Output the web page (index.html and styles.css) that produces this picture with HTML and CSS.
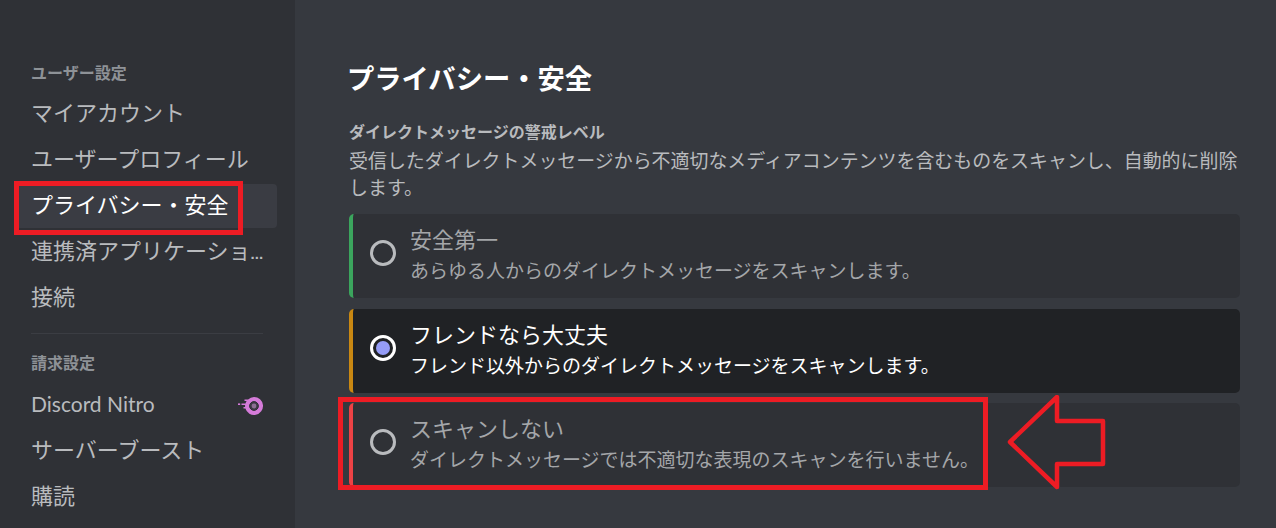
FILE: index.html
```html
<!DOCTYPE html>
<html lang="ja">
<head>
    <meta charset="UTF-8">
    <meta name="viewport" content="width=device-width, initial-scale=1.0">
    <title>プライバシー・安全</title>
    <link rel="stylesheet" href="styles.css">
</head>
<body>
    <div id="page">
        <nav class="sidebar">
            <div class="nav-label">ユーザー設定</div>
            <a class="nav-item">マイアカウント</a>
            <a class="nav-item">ユーザープロフィール</a>
            <a class="nav-item active">プライバシー・安全</a>
            <a class="nav-item">連携済アプリケーショ<span class="dots">...</span></a>
            <a class="nav-item">接続</a>
            <div class="nav-divider"></div>
            <div class="nav-label billing">請求設定</div>
            <a class="nav-item nitro">
                <span class="nitro-name">Discord Nitro</span>
                <svg class="nitro-icon" width="26" height="20" viewBox="0 0 26 20">
                    <path fill="#d57bd9" d="M16 1a9 9 0 1 1-8.6 11.6H5.5V11h1.6a9 9 0 0 1 0-2H3.5V7.4h4A9 9 0 0 1 8.6 5H6.5V3.4h3.6A9 9 0 0 1 16 1z"/>
                    <rect x="0" y="7.4" width="2.2" height="1.6" fill="#d57bd9"/>
                    <circle cx="16" cy="10" r="4.4" fill="#3f3a45" stroke="#2f3136" stroke-width="1"/>
                    <circle cx="16" cy="10" r="2.4" fill="#8d6f93"/>
                </svg>
            </a>
            <a class="nav-item">サーバーブースト</a>
            <a class="nav-item">購読</a>
        </nav>

        <main class="content">
            <h1>プライバシー・安全</h1>
            <h2>ダイレクトメッセージの警戒レベル</h2>
            <p class="desc">受信したダイレクトメッセージから不適切なメディアコンテンツを含むものをスキャンし、自動的に削除します。</p>

            <div class="options">
                <div class="option safe">
                    <span class="radio"></span>
                    <div class="option-text">
                        <div class="option-title">安全第一</div>
                        <div class="option-sub">あらゆる人からのダイレクトメッセージをスキャンします。</div>
                    </div>
                </div>
                <div class="option friends selected">
                    <span class="radio"></span>
                    <div class="option-text">
                        <div class="option-title">フレンドなら大丈夫</div>
                        <div class="option-sub">フレンド以外からのダイレクトメッセージをスキャンします。</div>
                    </div>
                </div>
                <div class="option none">
                    <span class="radio"></span>
                    <div class="option-text">
                        <div class="option-title">スキャンしない</div>
                        <div class="option-sub">ダイレクトメッセージでは不適切な表現のスキャンを行いません。</div>
                    </div>
                </div>
            </div>
        </main>

        <div class="mark mark-nav"></div>
        <div class="mark mark-option"></div>
        <svg class="mark-arrow" width="104" height="100" viewBox="0 0 104 100">
            <polygon points="3,47 50,2 50,26 96,26 96,69 50,69 50,92" fill="none" stroke="#ed1c24" stroke-width="4.5" stroke-linejoin="round"/>
        </svg>
    </div>
</body>
</html>
```

FILE: styles.css
```css
* {
    box-sizing: border-box;
}

html, body {
    margin: 0;
    padding: 0;
    height: 100%;
    overflow: hidden;
}

body {
    font-family: "Noto Sans CJK JP", "Liberation Sans", sans-serif;
    background-color: #36393f;
    color: #b9bbbe;
}

#page {
    position: relative;
    display: flex;
    width: 1276px;
    height: 528px;
    overflow: hidden;
}

.sidebar {
    flex: 0 0 295px;
    min-width: 0;
    background-color: #2f3136;
    padding: 59px 18px 0 16px;
}

.nav-label {
    height: 26px;
    line-height: 26px;
    padding-left: 15px;
    font-size: 16px;
    font-weight: 700;
    color: #8e9297;
    margin-bottom: 7px;
}

.nav-label.billing {
    margin-bottom: 8px;
}

.nav-item {
    display: block;
    height: 44px;
    line-height: 38px;
    margin-bottom: 2px;
    padding: 0 14px 0 15px;
    font-size: 22px;
    color: #b9bbbe;
    border-radius: 4px;
    white-space: nowrap;
    overflow: hidden;
}

.nav-item.active {
    background-color: #3a3c43;
    color: #ffffff;
}

.dots {
    font-family: "Liberation Sans", sans-serif;
    font-size: 15px;
    font-weight: 700;
}

.nitro {
    display: flex;
    align-items: center;
    justify-content: space-between;
    padding: 0 13px 2px 15px;
}

.nitro-name {
    font-family: Lato, "Liberation Sans", sans-serif;
    font-size: 21px;
}

.nitro-icon {
    flex: none;
    margin-top: 3px;
}

.nav-divider {
    height: 1px;
    margin: 13px 14px 15px 15px;
    background-color: #3b3d43;
}

.content {
    flex: 1;
    min-width: 0;
    padding: 57px 36px 0 54px;
}

h1 {
    margin: 0 0 23px -2px;
    font-size: 27.3px;
    line-height: 40px;
    font-weight: 700;
    color: #ffffff;
}

h2 {
    margin: 0 0 4px;
    font-size: 16px;
    line-height: 22px;
    font-weight: 700;
    color: #b9bbbe;
}

.desc {
    margin: 0 0 14px;
    font-size: 18.95px;
    line-height: 27px;
    color: #b9bbbe;
}

.options {
    display: flex;
    flex-direction: column;
    gap: 10.5px;
}

.option {
    display: flex;
    align-items: center;
    height: 84px;
    padding: 0 0 6px 17px;
    background-color: #2f3136;
    border-left: 4px solid #3ba55d;
    border-radius: 5px;
    color: #a4a6a9;
}

.radio {
    flex: none;
    width: 26px;
    height: 26px;
    margin-right: 14px;
    border: 3px solid #b9bbbe;
    border-radius: 50%;
}

.option-title {
    font-size: 22px;
    line-height: 34px;
}

.option-sub {
    font-size: 19px;
    line-height: 30px;
}

.friends {
    background-color: #202225;
    border-left-color: #c98812;
    color: #ffffff;
}

.friends .radio {
    display: flex;
    align-items: center;
    justify-content: center;
    border-color: #ffffff;
}

.friends .radio::after {
    content: "";
    width: 14px;
    height: 14px;
    border-radius: 50%;
    background-color: #959cf7;
}

.none {
    border-left-color: #ed4245;
}

.mark {
    position: absolute;
    border: 5px solid #ed1c24;
}

.mark-nav {
    left: 14px;
    top: 181px;
    width: 229px;
    height: 54px;
}

.mark-option {
    left: 338px;
    top: 397px;
    width: 650px;
    height: 93px;
}

.mark-arrow {
    position: absolute;
    left: 1007px;
    top: 395px;
}
```
